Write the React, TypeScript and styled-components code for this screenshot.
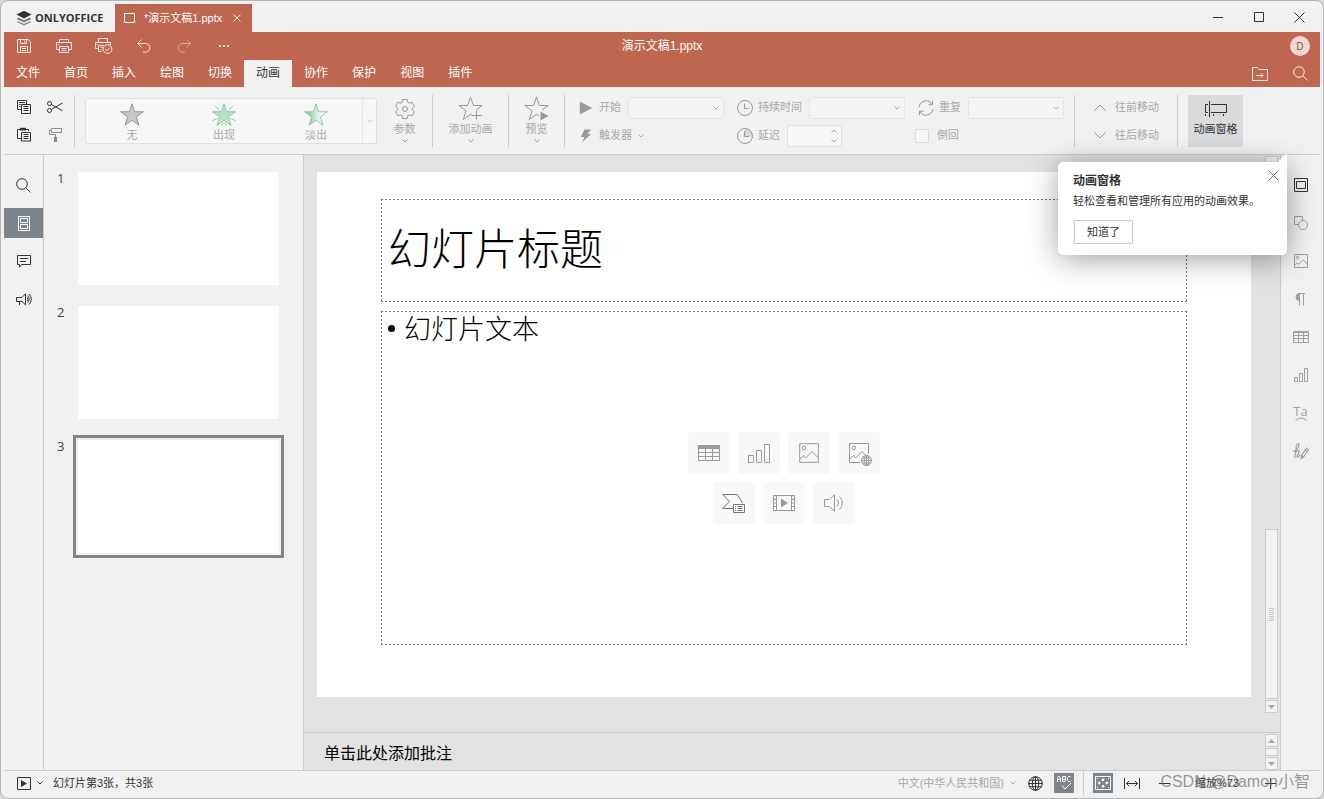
import React from 'react';
import styled, { createGlobalStyle, css } from 'styled-components';

const c = {
  brand: '#be664f',
  panel: '#f1f1f1',
  canvas: '#e2e2e2',
  line: '#cbcbcb',
  ink: '#333333',
  muted: '#a8a8a8',
  mutedIcon: '#999999',
  active: '#7d858c',
};

const Global = createGlobalStyle`
  *, *::before, *::after { box-sizing: border-box; }
  body {
    margin: 0;
    background: #d9d9d9;
    font-family: "Liberation Sans", "Noto Sans CJK SC", sans-serif;
    font-size: 11px;
    line-height: 13px;
    color: ${c.ink};
  }
  button, input, select { font: inherit; color: inherit; }
  button { border: 0; padding: 0; background: none; cursor: pointer; }
  svg { display: block; flex: none; }
  h1, h2, p, ul { margin: 0; padding: 0; font-weight: 400; }
`;

/* ---------- icons ---------- */

type IconProps = { w: number; h?: number; sw?: number; color?: string; children: React.ReactNode };
const Icon = ({ w, h = w, sw = 1, color = 'currentColor', children }: IconProps) => (
  <svg width={w} height={h} viewBox={`0 0 ${w} ${h}`} fill="none" stroke={color} strokeWidth={sw} aria-hidden="true">
    {children}
  </svg>
);

const Logo = () => (
  <svg width="16" height="16" viewBox="0 0 16 16" aria-hidden="true">
    <path d="M8 8.6 15.6 12 8 15.4.4 12l1.8-.8L8 13.8l5.8-2.6-1.6-.7z" fill="#8d8d8d" />
    <path d="M.4 8.7 2.3 7.8 8 10.4l5.7-2.6 1.9.9L8 12.2z" fill="#666" />
    <path d="M8 .8 15.6 4.4 8 8.6.4 4.4z" fill="#333" />
  </svg>
);
const SlideTab = () => <Icon w={12} h={10}><path d="M.5.5h10v9H.5z" /></Icon>;
const Cross = ({ s = 9 }: { s?: number }) => <Icon w={s}><path d={`M.5.5l${s - 1} ${s - 1}M${s - 0.5}.5l-${s - 1} ${s - 1}`} /></Icon>;
const Minimize = () => <Icon w={10}><path d="M0 5.5h10" /></Icon>;
const Maximize = () => <Icon w={10}><path d="M.5.5h9v9h-9z" /></Icon>;
const Save = () => (
  <Icon w={14}><path d="M.5.5h10.6l2.4 2.4v10.6H.5zM3.5.5v4h6v-4M7.5 1.5v2M3.5 13.5v-6h7v6M5 9.5h4M5 11.5h4" /></Icon>
);
const Print = () => (
  <Icon w={16} h={14}><path d="M3.5 3.5v-3h9v3M3.5 10.5h-3v-7h15v7h-3M3.5 7.5h9v6h-9zM2 5.5h1.5M5.5 9.5h5M5.5 11.5h5" /></Icon>
);
const PrintCheck = () => (
  <Icon w={18} h={16}>
    <path d="M3.5 4.5v-4h9v4M3.5 10.5h-3v-6h15v3M9 7.5H3.5v6H7M2 6.5h1M5.5 9.5h2M5.5 11.5h1" />
    <circle cx="12.5" cy="11" r="4.4" /><path d="M10.2 11l1.8 1.8 3-3.2" />
  </Icon>
);
const Undo = () => <Icon w={14}><path d="M4.5.5l-4 4 4 4M.5 4.5h8a4.3 4.3 0 0 1 0 8.7H6" /></Icon>;
const Redo = () => <Icon w={14}><path d="M9.5.5l4 4-4 4M13.5 4.5h-8a4.3 4.3 0 0 0 0 8.7H8" /></Icon>;
const Dots = () => (
  <svg width="10" height="2" viewBox="0 0 10 2" fill="currentColor" aria-hidden="true"><path d="M0 0h2v2H0zM4 0h2v2H4zM8 0h2v2H8z" /></svg>
);
const FolderGo = () => (
  <Icon w={16} h={14}><path d="M.5 13.5v-13h5l1.500 2h8.500v11zM4 8.500h7M8.500 6l2.500 2.500L8.500 11" /></Icon>
);
const Search = () => <Icon w={15}><circle cx="6" cy="6" r="5.300" /><path d="M9.800 9.800l4.700 4.700" /></Icon>;

const Copy = () => (
  <Icon w={14}><path d="M4 9.500H.5v-9h9V4M2 2.500h6M2 4.500h1.500M2 6.500h1.500M4.500 4.500h9v9h-9zM6.500 6.500h5M6.500 8.500h5M6.500 10.500h5" /></Icon>
);
const Paste = () => (
  <Icon w={14} h={15}><path d="M3 2.500H.5v9H4M9 2.500h2.500V4M4.500 5.500h9v8.500h-9zM6.500 7.500h5M6.500 9.500h5M6.500 11.500h5" /><path d="M3 .8h6v2.700H3z" fill="currentColor" stroke="none" /></Icon>
);
const Cut = () => (
  <Icon w={16} h={12}><circle cx="2.500" cy="2.500" r="2" /><circle cx="2.500" cy="9.500" r="2" /><path d="M4.300 3.500L15.500 9.800M4.300 8.500L15.500 2" /></Icon>
);
const Roller = () => (
  <Icon w={13} h={14}><path d="M2.500.5h10v4h-10zM2.500 2.500h-2v4h6V9" /><path d="M5 9h3v5H5z" fill="currentColor" stroke="none" /></Icon>
);

const STAR = 'M12 .8 14.700 8.800h8.600L16.400 13.900 19 22.300 12 17.300 5 22.300 7.600 13.900.7 8.800h8.600z';
const StarNone = () => <Icon w={24} color="#989898"><path d={STAR} fill="#c9c9c9" /></Icon>;
const StarAppear = () => (
  <Icon w={24} color="#8fcaa0">
    <path d="M3 3l4.500 4.500M21 3l-4.500 4.500M.5 17.500l5-2M23.500 17.500l-5-2M9 22l3-2 3 2" />
    <path d={STAR} fill="#c0dfc8" />
  </Icon>
);
const StarFade = () => (
  <Icon w={24} color="#8fcaa0">
    <defs><linearGradient id="fade"><stop offset=".15" stopColor="#93cba3" /><stop offset=".7" stopColor="#f2f8f3" /></linearGradient></defs>
    <path d={STAR} fill="url(#fade)" />
  </Icon>
);
const Gear = () => (
  <Icon w={22}>
    <path d="M8.700 1.500h4.600l.6 2.800 1.500.9 2.800-.9 2.300 4-2.100 1.900v1.600l2.100 1.900-2.300 4-2.800-.9-1.500.9-.6 2.800H8.700l-.6-2.800-1.500-.9-2.800.9-2.300-4 2.100-1.900v-1.600L1.500 8.300l2.300-4 2.800.9 1.500-.9z" />
    <circle cx="11" cy="11" r="2.500" />
  </Icon>
);
const StarPlus = () => (
  <Icon w={26}><path d="M14 19.300l-1.500-1L5.300 23.500 8 14.800.8 9.500h8.800L12.500 1l2.900 8.500h8.800l-5.700 4.200M18.500 14.500v9M14 19.500h10" /></Icon>
);
const StarPlay = () => (
  <Icon w={26}><path d="M15 20l-2.500-1.700L5.300 23.500 8 14.800.8 9.500h8.800L12.500 1l2.900 8.500h8.800L18 14" /><path d="M16.500 15.500v9l8-4.500z" fill="currentColor" stroke="none" /></Icon>
);
const Play = () => <Icon w={14}><path d="M.8.500v13L13.300 7z" fill="currentColor" stroke="none" /></Icon>;
const Bolt = () => <Icon w={12} h={14}><path d="M4.500.500H11L7.500 5h3.700L2 13.500 4.500 8H.800z" fill="currentColor" stroke="none" /></Icon>;
const Clock = () => <Icon w={16}><circle cx="8" cy="8" r="7.500" /><path d="M7.500 3.500v5h4" /></Icon>;
const Delay = () => (
  <Icon w={16}><path d="M8 .5A7.500 7.500 0 0 1 15.500 8.500H8z" fill="#d8d8d8" stroke="none" /><circle cx="8" cy="8" r="7.500" /><path d="M7.500 3v5.500H12" /></Icon>
);
const Repeat = () => (
  <Icon w={16}><path d="M1.200 7A6.800 6.800 0 0 1 14 4.500M14.500.8v4h-4M14.800 9A6.800 6.800 0 0 1 2 11.500M1.500 15.200v-4h4" /></Icon>
);
const Chevron = ({ up, w = 6 }: { up?: boolean; w?: number }) => (
  <Icon w={w} h={w / 2 + 1}><path d={up ? `M.5 ${w / 2 + 0.5}L${w / 2} 1l${w / 2 - 0.5} ${w / 2 - 0.5}` : `M.5.5L${w / 2} ${w / 2}l${w / 2 - 0.5}-${w / 2 - 0.5}`} /></Icon>
);
const PaneIcon = () => (
  <Icon w={24} h={16}><path d="M5.500 0v16M4 3.500H1.500v8H4M7 3.500h15.500v8H7M1.500 13v2M9.500 13v2M19.500 13v2" /></Icon>
);

const Thumbs = () => <Icon w={12} h={15}><path d="M.5.5h11v14H.5zM2.500 2.500h7v4h-7zM2.500 8.500h7v4h-7z" /></Icon>;
const Comment = () => <Icon w={14} h={13}><path d="M.5.500h13v9h-9l-2 2.500V9.500h-2zM3 3.500h8M3 6.500h6" /></Icon>;
const Horn = () => (
  <Icon w={16} h={13}><path d="M9.500.8v11L6 8.500H.5v-4H6zM3.500 8.500V12M11.500 2.500a5 5 0 0 1 0 7.500M13 1a7 7 0 0 1 0 10.500M11.300 4.500a3 3 0 0 1 0 3.500" /></Icon>
);
const SlideSet = () => <Icon w={14}><path d="M.5.500h13v13H.5zM2.500 3.500h9v7h-9z" /></Icon>;
const Shapes = () => <Icon w={14}><path d="M4 8.500H.5v-8h8V4" /><circle cx="9" cy="9" r="4.500" /></Icon>;
const Picture = ({ w = 14 }: { w?: number }) => (
  <svg width={w} height={w} viewBox="0 0 20 20" fill="none" stroke="currentColor" strokeWidth={20 / w} aria-hidden="true">
    <path d="M.7.700h18.600v18.600H.7zM1 16l3.500-3.500 2 2.500L13 8.500l6.500 6.500" /><circle cx="5" cy="5" r="1.700" />
  </svg>
);
const Para = () => <Icon w={11} h={13}><path d="M4.500.5v12M8.500.5v12M3 .500h7" /><path d="M4.500.5a3.500 3.500 0 0 0 0 7z" fill="currentColor" /></Icon>;
const Table = () => <Icon w={16} h={12}><path d="M.5.500h15v11H.5zM0 1.500h16M.5 4.500h15M.5 7.500h15M5.500 2v9.500M10.500 2v9.500" /></Icon>;
const Bars = () => <Icon w={14}><path d="M.5 9.500h3v4h-3zM5.500 5.500h3v8h-3zM10.500.500h3v13h-3z" /></Icon>;
const Arc = () => <Icon w={12} h={4}><path d="M.5 3.500Q6-1.500 11.500 3.500" /></Icon>;
const Sign = () => (
  <Icon w={17} sw={1.2}>
    <path d="M1 8.500c3 0 6-4 6-6.500 0-2-2-1.500-2.500.5C3.500 6 4 11 2.500 15M4 9c1.500-2 3.500-2 3 0-.5 2-2.500 4-2 5s2-.5 3-2.500" />
    <path d="M9 15.500l.5-3 5-7.500 2 1.500-5 7.500zM13 7l2 1.500M9.500 12.500l2 1.500" />
  </Icon>
);

const BigTable = () => (
  <Icon w={22} h={16}><path d="M.5.500h21v15H.5zM.5 7.500h21M.5 11.500h21M7.500 4v11.500M14.500 4v11.500" /><path d="M0 0h22v4H0z" fill="currentColor" stroke="none" /></Icon>
);
const BigBars = () => <Icon w={22} h={20}><path d="M.500 12.500h5v7h-5zM8.500 7.500h5v12h-5zM16.500 1.500h5v18h-5z" /></Icon>;
const Globe = ({ w = 14 }: { w?: number }) => (
  <svg width={w} height={w} viewBox="0 0 14 14" fill="none" stroke="currentColor" strokeWidth={14 / w} aria-hidden="true">
    <circle cx="7" cy="7" r="6.300" /><ellipse cx="7" cy="7" rx="3" ry="6.300" /><path d="M7 .5v13M.5 7h13M1.500 4h11M1.500 10h11" />
  </svg>
);
const PictureWeb = () => (
  <Icon w={26}>
    <g transform="translate(3 3)">
      <path d="M11 19.500H.500V.500h19V11M1 16l3.500-3.500 2 2.500L13 8.500l4 4" /><circle cx="5" cy="5" r="1.700" />
      <circle cx="17.500" cy="17.500" r="5" /><ellipse cx="17.500" cy="17.500" rx="2.300" ry="5" />
      <path d="M17.500 12.500v10M12.500 17.500h10M13.500 15h8M13.500 20h8" />
    </g>
  </Icon>
);
const SmartArt = () => (
  <Icon w={24} h={20} color="#777777">
    <path d="M11 15.500H.8l6.700-7L.8 1.500H15l3.500 5 2 3.500M11.500 11.500h11v8h-11zM15.500 13.500h5M15.500 15.500h5M15.500 17.500h5M13 13.500h1M13 15.500h1M13 17.500h1" />
  </Icon>
);
const Video = () => (
  <Icon w={22} h={16}><path d="M.5.500h21v15H.5zM3.500.5v15M18.500.5v15M.5 4.500h3M.5 8h3M.5 11.500h3M18.500 4.500h3M18.500 8h3M18.500 11.500h3" /><path d="M8 3.500v9L15 8z" fill="currentColor" stroke="none" /></Icon>
);
const Audio = () => (
  <Icon w={20} h={18}><path d="M.5 5.500h5l5-4.700v16.400l-5-4.700h-5zM13 5.500a5 5 0 0 1 0 7M15.500 2.500a9 9 0 0 1 0 13" /></Icon>
);

const PlayBox = () => <Icon w={14} h={13}><path d="M.5.500h13v12H.5z" /><path d="M4 3v7l6-3.500z" fill="currentColor" stroke="none" /></Icon>;
const Spell = () => (
  <Icon w={16}>
    <path d="M1.500 7V3l1-1.500h1l1 1.500v4M1.500 4.500h3M6.500 1.500V6.500h2.500l.5-.5V4.500H6.500M9.500 4V1.500h-3M14.500 1.500h-2l-1 1v3l1 1h2M6 10.500l3 3.500 6-6" />
  </Icon>
);
const FitPage = () => (
  <Icon w={16}>
    <path d="M.5 1.500h15v13H.5z" />
    <path d="M8 3l2 2H9v1H7V5H6zM8 13l2-2H9v-1H7v1H6zM2.500 8l2-2v1h1v2h-1v1zM13.500 8l-2-2v1h-1v2h1v1z" fill="currentColor" stroke="none" />
    <path d="M2 3h1v1H2zM13 3h1v1h-1zM2 12h1v1H2zM13 12h1v1h-1z" fill="currentColor" stroke="none" />
  </Icon>
);
const FitWidth = () => <Icon w={16} h={11}><path d="M.5 0v11M15.500 0v11M2.500 5.500h11M5 3L2.500 5.500 5 8M11 3l2.500 2.500L11 8" /></Icon>;
const Minus = () => <Icon w={11}><path d="M0 5.500h11" /></Icon>;
const Plus = () => <Icon w={11}><path d="M0 5.500h11M5.500 0v11" /></Icon>;
const Triangle = ({ up }: { up?: boolean }) => (
  <svg width="7" height="4" viewBox="0 0 7 4" fill="#a6a6a6" aria-hidden="true"><path d={up ? 'M3.500 0 7 4H0z' : 'M3.500 4 7 0H0z'} /></svg>
);

/* ---------- window ---------- */

const Frame = styled.div`
  position: relative;
  display: flex;
  flex-direction: column;
  min-height: 100vh;
  padding: 0 3px;
  border: 1px solid #b4b4b4;
  border-radius: 8px;
  background: ${c.panel};
`;
const TitleBar = styled.header`
  display: flex;
  height: 31px;
  align-items: flex-end;
`;
const Brand = styled.div`
  display: flex;
  align-items: center;
  gap: 3px;
  width: 111px;
  height: 28px;
  padding-left: 12px;
  font: 700 11px/16px "Open Sans", sans-serif;
`;
const DocTab = styled.div`
  display: flex;
  align-items: center;
  gap: 8px;
  height: 28px;
  padding: 0 11px 0 9px;
  background: ${c.brand};
  color: #fff;
  & > span { margin-right: 3px; }
`;
const TabClose = styled.button`
  color: #fff;
  opacity: 0.85;
`;
const WindowButtons = styled.div`
  display: flex;
  margin-left: auto;
`;
const WindowButton = styled.button`
  display: grid;
  place-items: center;
  width: 41px;
  height: 30px;
`;
const QuickBar = styled.div`
  display: grid;
  grid-template-columns: 1fr auto 1fr;
  align-items: center;
  height: 28px;
  background: ${c.brand};
  color: #fff;
  font-size: 12px;
`;
const ButtonRun = styled.div<{ $end?: boolean }>`
  display: flex;
  justify-content: ${p => (p.$end ? 'flex-end' : 'flex-start')};
  margin-left: ${p => (p.$end ? 'auto' : '0')};
`;
const HeaderButton = styled.button<{ $dim?: boolean }>`
  display: grid;
  place-items: center;
  width: 40px;
  height: 27px;
  color: #fff;
  opacity: ${p => (p.$dim ? 0.45 : 0.85)};
`;
const Avatar = styled.span`
  width: 20px;
  height: 20px;
  border-radius: 10px;
  background: #fbeeea;
  color: #7b4133;
  font: 10px/20px "Open Sans", sans-serif;
  text-align: center;
`;
const TabBar = styled.nav`
  display: flex;
  height: 27px;
  background: ${c.brand};
`;
const Tab = styled.button<{ $active?: boolean }>`
  padding: 0 12px;
  font-size: 12px;
  color: ${p => (p.$active ? c.ink : '#fff')};
  background: ${p => (p.$active ? c.panel : 'transparent')};
`;

/* ---------- toolbar ---------- */

const Toolbar = styled.div`
  display: flex;
  align-items: center;
  height: 68px;
  border-bottom: 1px solid ${c.line};
  color: ${c.mutedIcon};
`;
const Clipboard = styled.div`
  display: grid;
  grid-template-columns: 30px 30px;
  column-gap: 1px;
  margin: 0 4px 0 5px;
`;
const ClipButton = styled.button<{ $dim?: boolean }>`
  display: grid;
  place-items: center;
  height: 28px;
  color: ${p => (p.$dim ? '#8c8c8c' : c.ink)};
`;
const Sep = styled.span<{ $wide?: boolean; $tight?: boolean }>`
  width: 1px;
  height: 52px;
  margin: 0 10px 0 ${p => (p.$wide ? '18px' : p.$tight ? '0' : '10px')};
  background: ${c.line};
`;
const Gallery = styled.div`
  display: flex;
  height: 46px;
  margin-right: 10px;
  border: 1px solid #e0e0e0;
  border-radius: 2px;
  background: #f7f7f7;
`;
const Effect = styled.button`
  display: flex;
  flex-direction: column;
  align-items: center;
  width: 92px;
  padding-top: 4px;
  gap: 2px;
  color: ${c.muted};
`;
const GalleryMore = styled.button`
  display: grid;
  place-items: center;
  width: 14px;
  border-left: 1px solid #e6e6e6;
  color: #c4c4c4;
`;
const BigButton = styled.button<{ $w: number; $on?: boolean }>`
  display: flex;
  flex-direction: column;
  align-items: center;
  width: ${p => p.$w}px;
  height: 52px;
  color: ${c.mutedIcon};
  white-space: nowrap;
  ${p => p.$on && css`background: #d8dadc; color: ${c.ink};`}
`;
const BigIcon = styled.span`
  display: grid;
  place-items: center;
  height: 28px;
`;
const Caption = styled.span<{ $dark?: boolean }>`
  margin-bottom: 3px;
  color: ${p => (p.$dark ? c.ink : c.muted)};
`;
const Fields = styled.div`
  display: flex;
  flex-direction: column;
  padding-top: 2px;
  & + & { margin-left: 10px; }
`;
const Field = styled.label`
  display: flex;
  align-items: center;
  height: 28px;
  color: ${c.muted};
  white-space: nowrap;
`;
const FieldIcon = styled.span<{ $w?: number }>`
  display: grid;
  place-items: center;
  width: ${p => p.$w ?? 22}px;
  margin-right: ${p => (p.$w ? 0 : 2)}px;
  color: ${c.mutedIcon};
`;
const Control = styled.span<{ $w: number }>`
  position: relative;
  display: flex;
  width: ${p => p.$w}px;
  height: 22px;
  margin-left: 7px;
  select, input {
    width: 100%;
    height: 100%;
    padding: 0 4px;
    appearance: none;
    border: 1px solid #e0e0e0;
    border-radius: 2px;
    background: #f7f7f7;
    outline: 0;
  }
`;
const Arrow = styled.span`
  position: absolute;
  top: 0;
  right: 5px;
  display: flex;
  flex-direction: column;
  justify-content: center;
  gap: 6px;
  height: 100%;
  pointer-events: none;
`;
const CheckField = styled(Field)`
  gap: 8px;
  input {
    appearance: none;
    width: 14px;
    height: 14px;
    margin: 0;
    border: 1px solid #dcdcdc;
    border-radius: 2px;
    background: #f7f7f7;
  }
`;
const RowButton = styled.button`
  display: flex;
  align-items: center;
  height: 28px;
  color: ${c.muted};
  span + svg { margin-left: 6px; }
`;

/* ---------- body ---------- */

const Body = styled.div`
  display: flex;
  flex: 1;
  align-items: stretch;
`;
const Rail = styled.nav<{ $right?: boolean }>`
  display: flex;
  flex-direction: column;
  flex: none;
  gap: 8px;
  width: 40px;
  padding-top: 15px;
  border: 0 solid ${c.line};
  border-width: ${p => (p.$right ? '0 0 0 1px' : '0 1px 0 0')};
`;
const RailButton = styled.button<{ $on?: boolean; $dim?: boolean }>`
  display: grid;
  place-items: center;
  align-content: center;
  height: 30px;
  color: ${p => (p.$on ? '#fff' : p.$dim ? '#a0a0a0' : c.ink)};
  background: ${p => (p.$on ? c.active : 'transparent')};
  & > span { font: 13px/12px "Open Sans", sans-serif; }
`;
const ThumbPane = styled.aside`
  display: flex;
  flex-direction: column;
  flex: none;
  gap: 21px;
  width: 260px;
  padding: 17px 0 0 13px;
  border-right: 1px solid ${c.line};
`;
const ThumbRow = styled.div`
  display: grid;
  grid-template-columns: 21px 201px;
  font: 13px/12px "Open Sans", sans-serif;
  color: #444;
`;
const Thumb = styled.button<{ $on?: boolean }>`
  height: 113px;
  background: #fff;
  ${p => p.$on && css`outline: 3px solid #848484; outline-offset: 2px;`}
`;
const Main = styled.main`
  display: flex;
  flex: 1;
  flex-direction: column;
  min-width: 0;
  background: ${c.canvas};
`;
const Work = styled.section`
  display: flex;
  flex: 1;
  padding-right: 2px;
`;
const Stage = styled.div`
  flex: 1;
  min-width: 0;
  padding: 17px 14px 35px 13px;
`;
const Slide = styled.article`
  display: grid;
  grid-template-rows: 103px 1fr;
  gap: 9px;
  aspect-ratio: 16 / 9;
  padding: 27px 64px 52px;
  background: #fff;
  color: #000;
`;
const dashX = 'repeating-linear-gradient(90deg, #777 0 2px, transparent 2px 4px)';
const dashY = 'repeating-linear-gradient(#777 0 2px, transparent 2px 4px)';
const Placeholder = styled.div`
  display: grid;
  padding: 1px 1px 1px 7px;
  background:
    ${dashX} top / 100% 1px no-repeat,
    ${dashX} bottom / 100% 1px no-repeat,
    ${dashY} left / 1px 100% no-repeat,
    ${dashY} right / 1px 100% no-repeat;
`;
const SlideTitle = styled.h1`
  align-self: center;
  padding-bottom: 10px;
  font: 300 43px/50px "Noto Sans CJK SC", sans-serif;
`;
const SlideText = styled.ul`
  grid-area: 1 / 1;
  list-style: none;
  font: 300 27px/32px "Noto Sans CJK SC", sans-serif;
  li { display: flex; align-items: center; gap: 9px; }
  li::before { content: ""; width: 7px; height: 7px; border-radius: 4px; background: #000; }
`;
const Tiles = styled.div`
  grid-area: 1 / 1;
  place-self: center;
  display: flex;
  flex-wrap: wrap;
  justify-content: center;
  gap: 8px;
  width: 192px;
  margin-right: 6px;
`;
const Tile = styled.button`
  display: grid;
  place-items: center;
  width: 42px;
  height: 42px;
  border-radius: 4px;
  background: #f8f8f8;
  color: ${c.mutedIcon};
`;
const Scroll = styled.div<{ $bottom?: number }>`
  display: flex;
  flex-direction: column;
  justify-content: space-between;
  flex: none;
  gap: 1px;
  width: 13px;
  margin: 1px 0 ${p => p.$bottom ?? 0}px;
`;
const ScrollButton = styled.button`
  display: grid;
  place-items: center;
  height: 13px;
  border: 1px solid ${c.line};
  background: ${c.panel};
`;
const ScrollThumb = styled.div<{ $long?: boolean }>`
  display: grid;
  place-items: center;
  height: ${p => (p.$long ? '170px' : '8px')};
  margin-top: ${p => (p.$long ? 'auto' : '0')};
  border: 1px solid ${c.line};
  background: ${c.panel};
`;
const Grip = styled.span`
  width: 5px;
  height: 13px;
  background: repeating-linear-gradient(#c8c8c8 0 1px, transparent 1px 2px);
`;
const Notes = styled.section`
  display: flex;
  height: 38px;
  padding-right: 2px;
  border-top: 1px solid ${c.line};
  p {
    flex: 1;
    padding-left: 20px;
    font: 16px/38px "Noto Sans CJK SC", sans-serif;
    color: #000;
  }
`;

/* ---------- status bar ---------- */

const Status = styled.footer`
  display: flex;
  align-items: center;
  height: 28px;
  padding: 0 40px 3px 13px;
  border-top: 1px solid ${c.line};
  white-space: nowrap;
`;
const StatusGroup = styled.div<{ $right?: boolean }>`
  display: flex;
  align-items: center;
  gap: ${p => (p.$right ? '9px' : '10px')};
  margin-left: ${p => (p.$right ? 'auto' : '0')};
  margin-right: ${p => (p.$right ? '12px' : '0')};
`;
const StatusButton = styled.button<{ $on?: boolean; $muted?: boolean }>`
  display: flex;
  align-items: center;
  justify-content: center;
  gap: 6px;
  min-width: 20px;
  height: 20px;
  color: ${p => (p.$on ? '#fff' : p.$muted ? c.muted : c.ink)};
  background: ${p => (p.$on ? c.active : 'transparent')};
`;
const StatusSep = styled.span`
  width: 1px;
  height: 24px;
  background: ${c.line};
`;
const Zoom = styled.span`
  width: 86px;
  text-align: center;
`;
const Watermark = styled.span`
  position: absolute;
  right: 13px;
  bottom: 6px;
  font-size: 16px;
  line-height: 20px;
  color: rgba(110, 110, 110, 0.7);
  pointer-events: none;
`;

/* ---------- hint ---------- */

const Hint = styled.section`
  position: absolute;
  top: 161px;
  right: 36px;
  width: 229px;
  padding: 12px 15px 11px;
  border-radius: 5px 0 5px 5px;
  background: #fff;
  box-shadow: 0 4px 30px rgba(0, 0, 0, 0.38);
  &::before {
    content: "";
    position: absolute;
    right: 0;
    top: -9px;
    border: solid transparent;
    border-width: 0 0 9px 9px;
    border-bottom-color: #fff;
  }
  h2 { font-size: 12px; line-height: 14px; font-weight: 700; }
  p { margin: 7px 0 12px; white-space: nowrap; }
`;
const HintClose = styled.button`
  position: absolute;
  top: 8px;
  right: 8px;
  color: #777;
`;
const HintButton = styled.button`
  display: block;
  width: 59px;
  height: 24px;
  margin-left: 1px;
  border: 1px solid #c8c8c8;
  border-radius: 1px;
`;

const tabs = ['文件', '首页', '插入', '绘图', '切换', '动画', '协作', '保护', '视图', '插件'];
const quick = [
  { name: '保存', icon: <Save /> },
  { name: '打印', icon: <Print /> },
  { name: '快速打印', icon: <PrintCheck /> },
  { name: '撤消', icon: <Undo /> },
  { name: '恢复', icon: <Redo />, dim: true },
  { name: '更多', icon: <Dots /> },
];
const effects = [
  { name: '无', icon: <StarNone /> },
  { name: '出现', icon: <StarAppear /> },
  { name: '淡出', icon: <StarFade /> },
];
const rightTools = [
  { name: '幻灯片设置', icon: <SlideSet /> },
  { name: '形状设置', icon: <Shapes />, dim: true },
  { name: '图片设置', icon: <Picture />, dim: true },
  { name: '段落设置', icon: <Para />, dim: true },
  { name: '表格设置', icon: <Table />, dim: true },
  { name: '图表设置', icon: <Bars />, dim: true },
  { name: '艺术字设置', icon: <><span>Ta</span><Arc /></>, dim: true },
  { name: '签名设置', icon: <Sign />, dim: true },
];
const inserts = [
  { name: '插入表格', icon: <BigTable /> },
  { name: '插入图表', icon: <BigBars /> },
  { name: '插入图片', icon: <Picture w={20} /> },
  { name: '网络图片', icon: <PictureWeb /> },
  { name: '插入智能图形', icon: <SmartArt /> },
  { name: '插入视频', icon: <Video /> },
  { name: '插入音频', icon: <Audio /> },
];

const SelectField = ({ icon, label }: { icon: React.ReactNode; label: string }) => (
  <Field>
    <FieldIcon>{icon}</FieldIcon>
    {label}
    <Control $w={96}>
      <select disabled><option value="" /></select>
      <Arrow><Chevron /></Arrow>
    </Control>
  </Field>
);

export default function App() {
  return (
    <>
      <Global />
      <Frame>
        <TitleBar>
          <Brand><Logo />ONLYOFFICE</Brand>
          <DocTab>
            <SlideTab />
            <span>*演示文稿1.pptx</span>
            <TabClose aria-label="关闭标签"><Cross s={8} /></TabClose>
          </DocTab>
          <WindowButtons>
            <WindowButton aria-label="最小化"><Minimize /></WindowButton>
            <WindowButton aria-label="最大化"><Maximize /></WindowButton>
            <WindowButton aria-label="关闭"><Cross s={11} /></WindowButton>
          </WindowButtons>
        </TitleBar>

        <QuickBar>
          <ButtonRun>
            {quick.map(q => <HeaderButton key={q.name} aria-label={q.name} $dim={q.dim}>{q.icon}</HeaderButton>)}
          </ButtonRun>
          <span>演示文稿1.pptx</span>
          <ButtonRun $end>
            <HeaderButton aria-label="用户"><Avatar>D</Avatar></HeaderButton>
          </ButtonRun>
        </QuickBar>
        <TabBar>
          {tabs.map(t => <Tab key={t} $active={t === '动画'}>{t}</Tab>)}
          <ButtonRun $end>
            <HeaderButton aria-label="打开文件位置"><FolderGo /></HeaderButton>
            <HeaderButton aria-label="查找"><Search /></HeaderButton>
          </ButtonRun>
        </TabBar>

        <Toolbar>
          <Clipboard>
            <ClipButton aria-label="复制"><Copy /></ClipButton>
            <ClipButton aria-label="剪切"><Cut /></ClipButton>
            <ClipButton aria-label="粘贴"><Paste /></ClipButton>
            <ClipButton aria-label="复制样式" $dim><Roller /></ClipButton>
          </Clipboard>
          <Sep $tight />
          <Gallery>
            {effects.map(e => <Effect key={e.name}>{e.icon}{e.name}</Effect>)}
            <GalleryMore aria-label="更多效果"><Chevron /></GalleryMore>
          </Gallery>
          <BigButton $w={35}><BigIcon><Gear /></BigIcon><Caption>参数</Caption><Chevron /></BigButton>
          <Sep />
          <BigButton $w={55}><BigIcon><StarPlus /></BigIcon><Caption>添加动画</Caption><Chevron /></BigButton>
          <Sep />
          <BigButton $w={35}><BigIcon><StarPlay /></BigIcon><Caption>预览</Caption><Chevron /></BigButton>
          <Sep />
          <Fields>
            <SelectField icon={<Play />} label="开始" />
            <RowButton><FieldIcon><Bolt /></FieldIcon><span>触发器</span><Chevron /></RowButton>
          </Fields>
          <Fields>
            <SelectField icon={<Clock />} label="持续时间" />
            <Field>
              <FieldIcon><Delay /></FieldIcon>
              延迟
              <Control $w={55}>
                <input type="text" disabled />
                <Arrow><Chevron up /><Chevron /></Arrow>
              </Control>
            </Field>
          </Fields>
          <Fields>
            <SelectField icon={<Repeat />} label="重复" />
            <CheckField><input type="checkbox" disabled />倒回</CheckField>
          </Fields>
          <Sep />
          <Fields>
            <RowButton><FieldIcon $w={30}><Chevron up w={12} /></FieldIcon>往前移动</RowButton>
            <RowButton><FieldIcon $w={30}><Chevron w={12} /></FieldIcon>往后移动</RowButton>
          </Fields>
          <Sep $wide />
          <BigButton $w={55} $on><BigIcon><PaneIcon /></BigIcon><Caption $dark>动画窗格</Caption></BigButton>
        </Toolbar>

        <Body>
          <Rail>
            <RailButton aria-label="查找"><Search /></RailButton>
            <RailButton aria-label="幻灯片" $on><Thumbs /></RailButton>
            <RailButton aria-label="批注"><Comment /></RailButton>
            <RailButton aria-label="反馈"><Horn /></RailButton>
          </Rail>
          <ThumbPane>
            {[1, 2, 3].map(n => (
              <ThumbRow key={n}>{n}<Thumb $on={n === 3} aria-label={`幻灯片 ${n}`} /></ThumbRow>
            ))}
          </ThumbPane>
          <Main>
            <Work>
              <Stage>
                <Slide>
                  <Placeholder><SlideTitle>幻灯片标题</SlideTitle></Placeholder>
                  <Placeholder>
                    <SlideText><li>幻灯片文本</li></SlideText>
                    <Tiles>
                      {inserts.map(i => <Tile key={i.name} aria-label={i.name}>{i.icon}</Tile>)}
                    </Tiles>
                  </Placeholder>
                </Slide>
              </Stage>
              <Scroll $bottom={19}>
                <ScrollButton aria-label="向上"><Triangle up /></ScrollButton>
                <ScrollThumb $long><Grip /></ScrollThumb>
                <ScrollButton aria-label="向下"><Triangle /></ScrollButton>
              </Scroll>
            </Work>
            <Notes>
              <p>单击此处添加批注</p>
              <Scroll>
                <ScrollButton aria-label="备注向上"><Triangle up /></ScrollButton>
                <ScrollThumb />
                <ScrollButton aria-label="备注向下"><Triangle /></ScrollButton>
              </Scroll>
            </Notes>
          </Main>
          <Rail $right>
            {rightTools.map(t => <RailButton key={t.name} aria-label={t.name} $dim={t.dim}>{t.icon}</RailButton>)}
          </Rail>
        </Body>

        <Status>
          <StatusGroup>
            <StatusButton aria-label="开始幻灯片放映"><PlayBox /><Chevron /></StatusButton>
            <span>幻灯片第3张，共3张</span>
          </StatusGroup>
          <StatusGroup $right>
            <StatusButton $muted>中文(中华人民共和国)<Chevron /></StatusButton>
            <StatusButton aria-label="文档语言"><Globe w={15} /></StatusButton>
            <StatusButton aria-label="拼写检查" $on><Spell /></StatusButton>
            <StatusSep />
            <StatusButton aria-label="适合幻灯片" $on><FitPage /></StatusButton>
            <StatusButton aria-label="适合宽度"><FitWidth /></StatusButton>
          </StatusGroup>
          <StatusButton aria-label="缩小"><Minus /></StatusButton>
          <Zoom>缩放%73</Zoom>
          <StatusButton aria-label="放大"><Plus /></StatusButton>
        </Status>

        <Hint>
          <h2>动画窗格</h2>
          <p>轻松查看和管理所有应用的动画效果。</p>
          <HintButton>知道了</HintButton>
          <HintClose aria-label="关闭提示"><Cross s={11} /></HintClose>
        </Hint>
        <Watermark>CSDN @Damon小智</Watermark>
      </Frame>
    </>
  );
}
